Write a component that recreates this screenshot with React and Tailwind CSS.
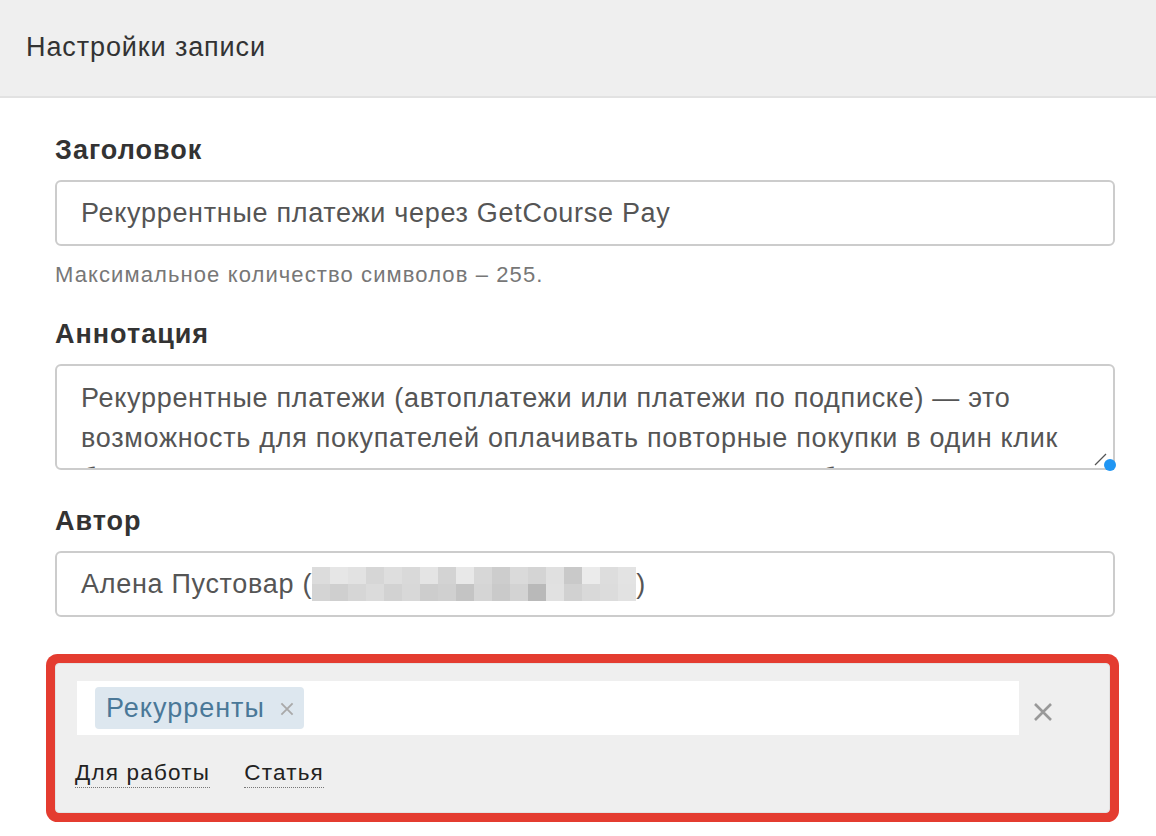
import React from 'react';

const blurTop = [
    'bg-[#dcdcdc]', 'bg-[#e6e6e6]', 'bg-[#e2e2e2]', 'bg-[#d6d6d6]', 'bg-[#dedede]', 'bg-[#d9d9d9]', 'bg-[#e4e4e4]', 'bg-[#d3d3d3]',
    'bg-[#e8e8e8]', 'bg-[#d7d7d7]', 'bg-[#cdcdcd]', 'bg-[#dadada]', 'bg-[#d4d4d4]', 'bg-[#e0e0e0]', 'bg-[#c9c9c9]', 'bg-[#ebebeb]',
    'bg-[#dddddd]', 'bg-[#e3e3e3]',
];
const blurBottom = [
    'bg-[#d4d4d4]', 'bg-[#cfcfcf]', 'bg-[#d6d6d6]', 'bg-[#dbdbdb]', 'bg-[#d2d2d2]', 'bg-[#d8d8d8]', 'bg-[#cdcdcd]', 'bg-[#d0d0d0]',
    'bg-[#c4c4c4]', 'bg-[#d5d5d5]', 'bg-[#cacaca]', 'bg-[#d3d3d3]', 'bg-[#b9b9b9]', 'bg-[#e1e1e1]', 'bg-[#d1d1d1]', 'bg-[#d9d9d9]',
    'bg-[#dcdcdc]', 'bg-[#e2e2e2]',
];

const Label = ({ children, className = '' }) => (
    <div className={`text-[27px] tracking-[1px] leading-[30px] font-bold text-[#333] ${className}`}>{children}</div>
);

const Cross = ({ size, stroke, color }) => (
    <svg width={size} height={size} viewBox="0 0 20 20">
        <path d="M2 2 L18 18 M18 2 L2 18" stroke={color} strokeWidth={stroke} strokeLinecap="butt" />
    </svg>
);

const App = () => {
    return (
        <div className="min-h-screen bg-white font-['Liberation_Sans',Arial,sans-serif]">
            {/* Header */}
            <div className="h-[98px] bg-[#efefef] border-b-2 border-[#e2e2e2] pl-[26px] flex items-center">
                <h1 className="text-[27px] tracking-[0.9px] text-[#333] leading-[30px] -mt-[2px]">Настройки записи</h1>
            </div>

            <div className="pl-[55px] pr-[41px]">
                {/* Title */}
                <Label className="pt-[37px]">Заголовок</Label>
                <div className="mt-[15px] h-[66px] border-2 border-[#cccccc] rounded-[6px] px-[24px] flex items-center text-[27px] tracking-[0.7px] text-[#555]">
                    Рекуррентные платежи через GetCourse Pay
                </div>
                <p className="mt-[15px] text-[22px] tracking-[1.1px] leading-[28px] text-[#777]">
                    Максимальное количество символов – 255.
                </p>

                {/* Annotation */}
                <Label className="mt-[30px]">Аннотация</Label>
                <div className="relative mt-[15px]">
                    <div className="h-[106px] border-2 border-[#cccccc] rounded-[6px] px-[24px] pt-[12px] overflow-hidden text-[27px] tracking-[0.7px] leading-[40px] text-[#555]">
                        Рекуррентные платежи (автоплатежи или платежи по подписке) — это возможность для покупателей оплачивать повторные покупки в один клик без повторного ввода данных карты. Такие платежи удобны.
                    </div>
                    <svg className="absolute right-[8px] bottom-[4px]" width="14" height="14" viewBox="0 0 14 14">
                        <line x1="2" y1="13" x2="13" y2="2" stroke="#555" strokeWidth="1.3" />
                    </svg>
                    <div className="absolute -right-[1px] -bottom-[1px] w-[12px] h-[12px] rounded-full bg-[#2196f3]" />
                </div>

                {/* Author */}
                <Label className="mt-[36px]">Автор</Label>
                <div className="mt-[15px] h-[66px] border-2 border-[#cccccc] rounded-[6px] px-[24px] flex items-center text-[27px] tracking-[0.7px] text-[#555]">
                    <span>Алена Пустовар (</span>
                    <span className="flex flex-col">
                        <span className="flex">
                            {blurTop.map((c, i) => (
                                <span key={i} className={`w-[18px] h-[17px] ${c}`} />
                            ))}
                        </span>
                        <span className="flex">
                            {blurBottom.map((c, i) => (
                                <span key={i} className={`w-[18px] h-[17px] ${c}`} />
                            ))}
                        </span>
                    </span>
                    <span>)</span>
                </div>
            </div>

            {/* Tags block */}
            <div className="mt-[46px] ml-[55px] mr-[46px] rounded-[4px] bg-[#efefef] border border-[#e3e3e3] ring-[9px] ring-[#e43c30] pt-[17px] pl-[21px] pr-[20px] h-[150px]">
                <div className="flex items-center">
                    <div className="w-[942px] h-[54px] bg-white flex items-center pl-[18px]">
                        <span className="h-[42px] rounded-[4px] bg-[#dde7ef] flex items-center pl-[11px] pr-[10px]">
                            <span className="text-[27px] tracking-[1px] text-[#4a7898]">Рекурренты</span>
                            <span className="ml-[15px] mt-[2px] flex items-center">
                                <Cross size={14} stroke={2.6} color="#a9a9a9" />
                            </span>
                        </span>
                    </div>
                    <span className="ml-[14px] mt-[7px] flex items-center">
                        <Cross size={20} stroke={2.6} color="#999" />
                    </span>
                </div>
                <div className="mt-[25px] -ml-[2px] flex gap-[34px] text-[22.5px] tracking-[1.2px] text-[#222] leading-[26px]">
                    <span className="border-b border-dotted border-[#777] pb-[1px]">Для работы</span>
                    <span className="border-b border-dotted border-[#777] pb-[1px]">Статья</span>
                </div>
            </div>
        </div>
    );
};

export default App;
